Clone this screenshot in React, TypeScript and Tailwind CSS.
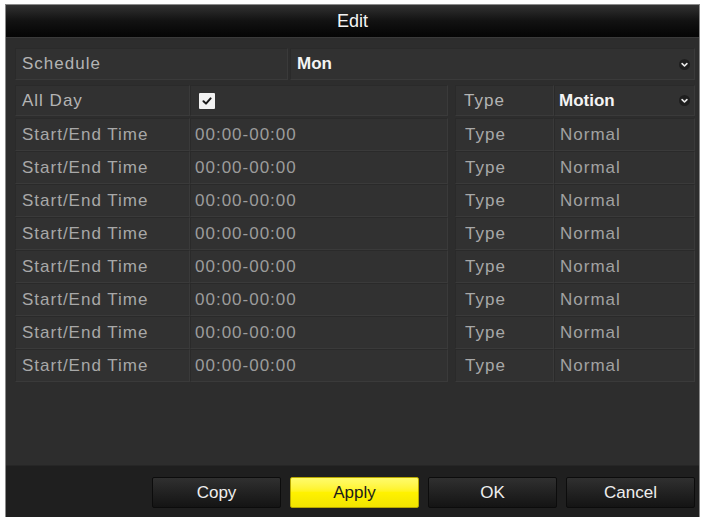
import React from "react";

const Chevron = () => (
  <svg width="11" height="11" viewBox="0 0 12 12" className="shrink-0">
    <circle cx="6" cy="6" r="6" fill="#1e1e1e" />
    <path d="M3.4 5 L6 7.6 L8.6 5" fill="none" stroke="#e8e8e8" strokeWidth={1.8} strokeLinecap="round" strokeLinejoin="round" />
  </svg>
);

const cell = "h-full flex items-center border border-t-[#2a2a2a] border-l-[#2a2a2a] border-b-[#3a3a3a] border-r-[#3a3a3a] bg-[#313131]";

const App = () => {
  const rows = Array.from({ length: 8 });

  return (
    <div className="w-[704px] h-[517px] bg-white pl-[5px] pt-[4px] pr-[4px] font-['Liberation_Sans',Arial,sans-serif] text-[17px] tracking-[1px] overflow-hidden">
      <div className="h-[513px] flex flex-col bg-[#2d2d2d] border-l border-t border-r border-[#8a8a8a]">
        {/* Title */}
        <div className="h-[33px] shrink-0 flex items-center justify-center bg-linear-to-b from-[#323232] via-[#121212] to-[#050505] border-b border-[#3a3a3a] text-[#f4f4f4] text-[18px] tracking-normal">
          Edit
        </div>

        {/* Form */}
        <div className="flex-1 pl-[9px] pr-[4px] pt-[10px] flex flex-col">
          {/* Schedule */}
          <div className="h-[32px] flex gap-[2px]">
            <div className={`${cell} w-[273px] pl-[6px] text-[#b4b4b4]`}>Schedule</div>
            <div className={`${cell} flex-1 pl-[6px] pr-[4px] justify-between text-[#f4f4f4] font-bold tracking-normal`}>
              Mon
              <Chevron />
            </div>
          </div>

          {/* All Day */}
          <div className="h-[31px] mt-[5px] flex">
            <div className={`${cell} w-[175px] pl-[6px] text-[#b4b4b4]`}>All Day</div>
            <div className={`${cell} w-[258px] pl-[8px]`}>
              <div className="w-[16px] h-[16px] bg-[#f2f2f2] flex items-center justify-center rounded-[1px]">
                <svg width="10" height="10" viewBox="0 0 10 10">
                  <path d="M1.5 5.2 L4 7.6 L8.6 2.4" fill="none" stroke="#1a1a1a" strokeWidth={2} strokeLinecap="round" strokeLinejoin="round" />
                </svg>
              </div>
            </div>
            <div className="w-[7px]" />
            <div className={`${cell} w-[99px] pl-[8px] text-[#b4b4b4]`}>Type</div>
            <div className={`${cell} flex-1 pl-[4px] pr-[4px] justify-between text-[#f4f4f4] font-bold tracking-normal`}>
              Motion
              <Chevron />
            </div>
          </div>

          {/* Time rows */}
          <div className="mt-[2px] flex flex-col">
            {rows.map((_, i) => (
              <div key={i} className="h-[33px] flex">
                <div className={`${cell} w-[175px] pl-[6px] text-[#a8a8a8]`}>Start/End Time</div>
                <div className={`${cell} w-[258px] pl-[4px] text-[#9c9c9c]`}>00:00-00:00</div>
                <div className="w-[7px]" />
                <div className={`${cell} w-[99px] pl-[9px] text-[#a8a8a8]`}>Type</div>
                <div className={`${cell} flex-1 pl-[5px] text-[#a2a2a2]`}>Normal</div>
              </div>
            ))}
          </div>
        </div>

        {/* Footer */}
        <div className="h-[52px] shrink-0 bg-[#1f1f1f] border-t border-[#262626] pt-[11px] pr-[4px] flex justify-end gap-[9px] tracking-normal">
          <button className="w-[129px] h-[31px] rounded-[2px] border border-[#0c0c0c] bg-linear-to-b from-[#303030] to-[#141414] text-[#eeeeee]">
            Copy
          </button>
          <button className="w-[129px] h-[31px] rounded-[2px] border border-[#b8a800] bg-linear-to-b from-[#fffb6a] via-[#fff200] to-[#f2e400] text-[#1c1c1c]">
            Apply
          </button>
          <button className="w-[129px] h-[31px] rounded-[2px] border border-[#0c0c0c] bg-linear-to-b from-[#303030] to-[#141414] text-[#eeeeee]">
            OK
          </button>
          <button className="w-[129px] h-[31px] rounded-[2px] border border-[#0c0c0c] bg-linear-to-b from-[#303030] to-[#141414] text-[#eeeeee]">
            Cancel
          </button>
        </div>
      </div>
    </div>
  );
};

export default App;
